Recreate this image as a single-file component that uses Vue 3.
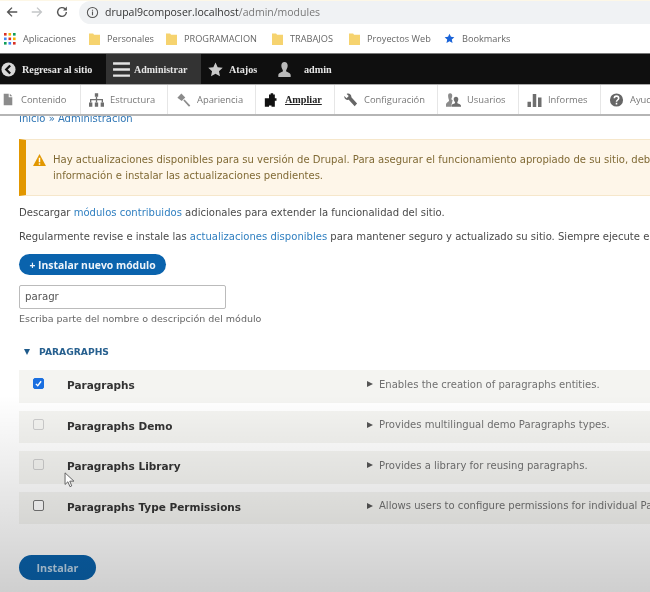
<template>
  <div class="page">
    <div class="browser-bar">
      <svg class="nav-icon" viewBox="0 0 16 16"><path d="M14 8H3M8 3 3 8l5 5" fill="none" stroke="#555" stroke-width="1.6" /></svg>
      <svg class="nav-icon" viewBox="0 0 16 16"><path d="M2 8h11M8 3l5 5-5 5" fill="none" stroke="#c4c6c8" stroke-width="1.6" /></svg>
      <svg class="nav-icon" viewBox="0 0 16 16"><path d="M13 8a5 5 0 1 1-1.5-3.6" fill="none" stroke="#555" stroke-width="1.6" /><path d="M13.6 1.8v4.4H9.2z" fill="#555" /></svg>
      <div class="url-box">
        <svg class="info-icon" viewBox="0 0 14 14"><circle cx="7" cy="7" r="5.5" fill="none" stroke="#555" stroke-width="1.1" /><path d="M7 6v4M7 4v1.2" stroke="#555" stroke-width="1.2" /></svg>
        <span class="url-host">drupal9composer.localhost</span><span class="url-path">/admin/modules</span>
      </div>
    </div>

    <div class="bookmarks">
      <div class="bookmark apps">
        <svg class="apps-icon" viewBox="0 0 12 12">
          <rect v-for="dot in appDots" :key="dot.key" :x="dot.x" :y="dot.y" width="2.6" height="2.6" :fill="dot.color" />
        </svg>
        Aplicaciones
      </div>
      <div v-for="folder in folders" :key="folder.name" class="bookmark" :style="{ width: folder.width + 'px' }">
        <svg class="folder-icon" viewBox="0 0 12 14"><path d="M0 1.5h4.5l1 1.5H12v11H0z" fill="#f6d36f" /></svg>
        {{ folder.name }}
      </div>
      <div class="bookmark">
        <svg class="star-small" viewBox="0 0 12 12"><path d="M6 .8l1.6 3.4 3.700.4-2.800 2.500.8 3.700L6 9l-3.300 1.800.8-3.700L.7 4.600l3.700-.4z" fill="#1a63d8" /></svg>
        Bookmarks
      </div>
    </div>

    <div class="toolbar">
      <a class="tool-item back">
        <svg class="tool-icon" viewBox="0 0 16 16"><circle cx="8" cy="8" r="7.500" fill="#d8d8d8" /><path d="M9.800 3.800 5.600 8l4.200 4.200" fill="none" stroke="#111" stroke-width="2.400" /></svg>
        Regresar al sitio
      </a>
      <a class="tool-item active">
        <svg class="burger" viewBox="0 0 18 16"><path d="M0 1.500h18M0 8h18M0 14.500h18" stroke="#e4e4e4" stroke-width="2.600" /></svg>
        Administrar
      </a>
      <a class="tool-item shortcuts">
        <svg class="tool-icon" viewBox="0 0 16 16"><path d="M8 .5l2.300 5 5.400.6-4 3.700 1.100 5.400L8 12.500l-4.800 2.700 1.100-5.400-4-3.700 5.400-.6z" fill="#c9c9c9" /></svg>
        Atajos
      </a>
      <a class="tool-item user">
        <svg class="tool-icon user-icon" viewBox="0 0 16 16"><path d="M8 0c2.200 0 3.400 1.700 3.400 4S10 8 9.600 9.500c0 1 5 1.800 5 4.500v2H1.400v-2c0-2.700 5-3.500 5-4.500C6 8 4.600 6.300 4.600 4S5.800 0 8 0z" fill="#b9b9b9" /></svg>
        admin
      </a>
    </div>

    <div class="tray">
      <a class="tray-item" style="width: 81px">
        <svg class="tray-icon" viewBox="0 0 14 16"><path d="M1 0h7v5h5v11H1zM9.500 0 13 3.600H9.500z" fill="#8b8b8b" /></svg>
        Contenido
      </a>
      <a class="tray-item" style="width: 87px">
        <svg class="tray-icon wide" viewBox="0 0 18 16"><path d="M7 0h4v4H7zM0 11h4v5H0zM7 11h4v5H7zM14 11h4v5h-4z" fill="#6e6e6e" /><path d="M9 4v7M2 11V7.500h14V11" fill="none" stroke="#6e6e6e" stroke-width="1.600" /></svg>
        Estructura
      </a>
      <a class="tray-item" style="width: 88px">
        <svg class="tray-icon wide" viewBox="0 0 16 16"><path d="M5.500 .5 10 5 6 9 1 5.500z" fill="#8b8b8b" /><path d="M8.500 8 15 15" stroke="#8b8b8b" stroke-width="2" /></svg>
        Apariencia
      </a>
      <a class="tray-item current" style="width: 79px">
        <svg class="tray-icon wide" viewBox="0 0 18 16"><path d="M6 1.500h2V0h3v1.500h2V6h2v3h-2v7H9v-1.500H6V16H1V6h5z" fill="#111" /></svg>
        Ampliar
      </a>
      <a class="tray-item" style="width: 103px">
        <svg class="tray-icon wide" viewBox="0 0 16 16"><path d="M1 3.500 3.500 6 6 3.500 3.600 1C6 -.3 9.200 1.400 9 4.800L15.500 12 12.800 15 6 7.800C3 8.500 .3 6 1 3.500z" fill="#666" /></svg>
        Configuración
      </a>
      <a class="tray-item" style="width: 81px">
        <svg class="tray-icon wide" viewBox="0 0 18 16"><path d="M5 0c1.700 0 2.500 1.300 2.500 3S6.500 6 6.300 7L8 8.300 6 16H0v-3c0-2 3.500-3 3.700-4.500C3.200 7 2.500 5 2.500 3S3.300 0 5 0z" fill="#8b8b8b" /><path d="M12 4c1.800 0 2.800 1.400 2.800 3.200S13.500 10.500 13.500 11.500c.5 1 4.500 1.200 4.500 3.500v1H6.500v-1c0-2.300 4-2.500 4.500-3.500 0-1-1.800-2.500-1.800-4.300S10.200 4 12 4z" fill="#6e6e6e" /></svg>
        Usuarios
      </a>
      <a class="tray-item" style="width: 82px">
        <svg class="tray-icon wide" viewBox="0 0 16 16"><path d="M0 10h4v6H0zM6 1h4v15H6zM12 5h4v11h-4z" fill="#6e6e6e" /></svg>
        Informes
      </a>
      <a class="tray-item">
        <svg class="tray-icon wide" viewBox="0 0 16 16"><circle cx="8" cy="8" r="7.500" fill="#666" /><path d="M5.500 6c0-3.200 5-3.200 5 0 0 2-2.500 2-2.500 4M8 11.200v2" fill="none" stroke="#fff" stroke-width="1.800" /></svg>
        Ayuda
      </a>
    </div>

    <main class="content">
      <div class="crumb"><span>Inicio » Administración</span></div>

      <div class="alert">
        <svg class="alert-icon" viewBox="0 0 14 13"><path d="M7 0 14 13H0z" fill="#e29700" /><path d="M7 4v5M7 10v1.600" stroke="#fff" stroke-width="1.600" /></svg>
        <p>Hay actualizaciones disponibles para su versión de Drupal. Para asegurar el funcionamiento apropiado de su sitio, debe<br />información e instalar las actualizaciones pendientes.</p>
      </div>

      <p class="intro">Descargar <a>módulos contribuidos</a> adicionales para extender la funcionalidad del sitio.</p>
      <p class="intro second">Regularmente revise e instale las <a>actualizaciones disponibles</a> para mantener seguro y actualizado su sitio. Siempre ejecute el</p>

      <button class="btn install-new">+ Instalar nuevo módulo</button>

      <div class="filter">paragr</div>
      <div class="hint">Escriba parte del nombre o descripción del módulo</div>

      <div class="group-title"><span class="caret"></span>PARAGRAPHS</div>

      <div class="modules">
        <div v-for="mod in modules" :key="mod.name" class="module-row">
          <span class="check" :class="mod.state">
            <svg v-if="mod.state === 'checked'" viewBox="0 0 12 12"><path d="M2.500 6.500 5 9l4.500-6" fill="none" stroke="#fff" stroke-width="1.800" /></svg>
          </span>
          <span class="module-name">{{ mod.name }}</span>
          <span class="module-desc"><i class="desc-arrow"></i>{{ mod.desc }}</span>
        </div>
      </div>

      <button class="btn install">Instalar</button>
    </main>

    <div class="shade"></div>
    <svg class="cursor" viewBox="0 0 12 18"><path d="M1 1v13l3.200-3 2.300 5.500 2-.9L6.300 10.300H11z" fill="#fff" stroke="#555" stroke-width="1" /></svg>
  </div>
</template>

<script setup>
const appColors = ['#d93025', '#f4b400', '#0f9d58', '#4285f4', '#d93025', '#f4b400', '#0f9d58', '#4285f4', '#d93025']
const appDots = appColors.map((color, i) => ({
  key: i,
  color,
  x: (i % 3) * 4.5,
  y: Math.floor(i / 3) * 4.5
}))

const folders = [
  { name: 'Personales', width: 77 },
  { name: 'PROGRAMACION', width: 106 },
  { name: 'TRABAJOS', width: 77 },
  { name: 'Proyectos Web', width: 95 }
]

const modules = [
  { name: 'Paragraphs', desc: 'Enables the creation of paragraphs entities.', state: 'checked' },
  { name: 'Paragraphs Demo', desc: 'Provides multilingual demo Paragraphs types.', state: 'disabled' },
  { name: 'Paragraphs Library', desc: 'Provides a library for reusing paragraphs.', state: 'disabled' },
  { name: 'Paragraphs Type Permissions', desc: 'Allows users to configure permissions for individual Paragraphs types.', state: '' }
]
</script>

<style>
html,
body {
  margin: 0;
  background: #fff;
}
</style>

<style scoped>
.page {
  position: relative;
  width: 650px;
  height: 592px;
  overflow: hidden;
  background: #fff;
  color: #444;
  font-family: "DejaVu Sans", sans-serif;
  filter: blur(0.45px);
}

.browser-bar {
  height: 23px;
  display: flex;
  align-items: center;
  padding-left: 5px;
  background: #fff;
  border-top: 1px solid #fdf7e6;
  box-sizing: border-box;
}

.nav-icon {
  width: 14px;
  height: 14px;
  margin-right: 11px;
  flex-shrink: 0;
}

.url-box {
  flex: 1;
  height: 23px;
  display: flex;
  align-items: center;
  margin-left: -1px;
  padding-left: 7px;
  background: #f0f2f4;
  border-radius: 12px 0 0 12px;
  font-family: "Open Sans", sans-serif;
  font-size: 10.5px;
}

.info-icon {
  width: 13px;
  height: 13px;
  margin-right: 6px;
}

.url-host {
  color: #333;
}

.url-path {
  color: #777;
}

.bookmarks {
  height: 30px;
  display: flex;
  align-items: center;
  padding: 1px 0 0 4px;
  box-sizing: border-box;
  font-family: "Open Sans", sans-serif;
  font-size: 9.2px;
  color: #666;
}

.bookmark {
  display: flex;
  align-items: center;
  white-space: nowrap;
  flex-shrink: 0;
}

.bookmark.apps {
  width: 85px;
}

.apps-icon {
  width: 12px;
  height: 12px;
  margin-right: 7px;
}

.folder-icon {
  width: 11px;
  height: 13px;
  margin-right: 7px;
}

.star-small {
  width: 11px;
  height: 11px;
  margin-right: 7px;
}

.toolbar {
  height: 31px;
  display: flex;
  background: #0f0f0f;
  border-top: 1px solid #777;
  box-sizing: border-box;
}

.tool-item {
  display: flex;
  align-items: center;
  color: #e6e6e6;
  font-family: "Liberation Serif", serif;
  font-size: 10.2px;
  font-weight: 700;
  white-space: nowrap;
  box-sizing: border-box;
}

.tool-item.back {
  width: 106px;
  padding-left: 1px;
}

.tool-item.active {
  width: 95px;
  padding-left: 7px;
  background: #333;
  font-size: 10px;
}

.tool-item.shortcuts {
  width: 76px;
  padding-left: 7px;
}

.tool-icon {
  width: 15px;
  height: 15px;
  margin-right: 6px;
}

.tool-icon.user-icon {
  margin-right: 12px;
}

.burger {
  width: 17px;
  height: 15px;
  margin-right: 4px;
}

.tray {
  position: relative;
  height: 32px;
  display: flex;
  background: #fff;
  border-top: 1px solid #aaa;
  border-bottom: 2px solid #b5b5b5;
  box-sizing: border-box;
  font-family: "Open Sans", sans-serif;
  font-size: 9.4px;
  color: #777;
}

.tray-item {
  display: flex;
  align-items: center;
  flex-shrink: 0;
  padding-left: 3px;
  border-right: 1px solid #e6e6e6;
  box-sizing: border-box;
  white-space: nowrap;
}

.tray-item + .tray-item {
  padding-left: 8px;
}

.tray-item:last-child {
  border-right: 0;
}

.tray-item.current {
  color: #222;
  font-family: "Liberation Serif", serif;
  font-weight: 700;
  font-size: 10.2px;
  text-decoration: underline;
}

.tray-icon {
  width: 10px;
  height: 13px;
  margin-right: 8px;
}

.tray-icon.wide {
  width: 15px;
  height: 14px;
  margin-right: 6px;
}

.content {
  padding-left: 19px;
}

.crumb {
  height: 7px;
  display: flex;
  align-items: flex-end;
  overflow: hidden;
  font-size: 10px;
  line-height: 13px;
  color: #2f76b5;
}

.crumb span {
  margin-bottom: -2px;
}

.alert {
  height: 57px;
  display: flex;
  align-items: flex-start;
  margin-top: 16px;
  padding: 12px 0 0 7px;
  box-sizing: border-box;
  background: #fef6e9;
  border-left: 7px solid #e29700;
  border-top: 1px solid #f6e7cb;
  border-bottom: 1px solid #f6e7cb;
  white-space: nowrap;
}

.alert-icon {
  width: 13px;
  height: 12px;
  margin: 2px 7px 0 0;
  flex-shrink: 0;
}

.alert p {
  margin: 0;
  font-size: 10.05px;
  line-height: 16px;
  color: #806a35;
}

.intro {
  margin: 9px 0 0;
  font-size: 10.05px;
  line-height: 15px;
  white-space: nowrap;
  color: #4a4a4a;
}

.intro.second {
  margin-top: 9px;
}

.intro a {
  color: #2f7fc0;
}

.btn {
  display: block;
  border: 0;
  border-radius: 11px;
  background: #0a63ad;
  color: #eef4fa;
  font-family: "Open Sans", sans-serif;
  font-weight: 700;
}

.install-new {
  width: 147px;
  height: 21px;
  margin-top: 10px;
  padding: 0;
  font-size: 10.4px;
}

.filter {
  width: 207px;
  height: 24px;
  margin-top: 10px;
  padding-left: 5px;
  box-sizing: border-box;
  border: 1px solid #bbb;
  border-radius: 2px;
  font-size: 10.2px;
  line-height: 22px;
  color: #555;
}

.hint {
  margin-top: 3px;
  font-size: 9.5px;
  line-height: 13px;
  color: #666;
}

.group-title {
  display: flex;
  align-items: center;
  margin: 20px 0 0 5px;
  font-size: 9.2px;
  font-weight: 700;
  line-height: 13px;
  color: #27608f;
}

.caret {
  width: 0;
  height: 0;
  margin-right: 9px;
  border-left: 3px solid transparent;
  border-right: 3px solid transparent;
  border-top: 6px solid #1e5a8a;
}

.modules {
  display: flex;
  flex-direction: column;
  gap: 8px;
  margin-top: 12px;
}

.module-row {
  height: 32.5px;
  display: flex;
  align-items: center;
  padding-left: 14px;
  background: #f4f4f1;
  white-space: nowrap;
}

.check {
  width: 9px;
  height: 9px;
  flex-shrink: 0;
  margin-top: -5px;
  border: 1px solid #777;
  border-radius: 2px;
  background: #fff;
}

.check svg {
  display: block;
  width: 9px;
  height: 9px;
}

.check.checked {
  background: #1a6fe0;
  border-color: #1a6fe0;
}

.check.disabled {
  background: transparent;
  border-color: #ccc;
}

.module-name {
  width: 300px;
  flex-shrink: 0;
  margin: -2px 0 0 23px;
  font-size: 10.5px;
  font-weight: 700;
  color: #333;
}

.module-desc {
  display: flex;
  align-items: center;
  margin-top: -4px;
  font-size: 10.05px;
  color: #707070;
}

.desc-arrow {
  width: 0;
  height: 0;
  margin-right: 6px;
  border-top: 3px solid transparent;
  border-bottom: 3px solid transparent;
  border-left: 6px solid #555;
}

.install {
  width: 77px;
  height: 25px;
  margin-top: 31px;
  border-radius: 13px;
  font-size: 10.8px;
  color: #bcd6ea;
  padding: 0;
}

.shade {
  position: absolute;
  left: 0;
  right: 0;
  top: 395px;
  bottom: 0;
  background: linear-gradient(to bottom, rgba(0, 0, 0, 0), rgba(0, 0, 0, 0.19));
  pointer-events: none;
}

.cursor {
  position: absolute;
  left: 64px;
  top: 472px;
  width: 11px;
  height: 16px;
}
</style>
